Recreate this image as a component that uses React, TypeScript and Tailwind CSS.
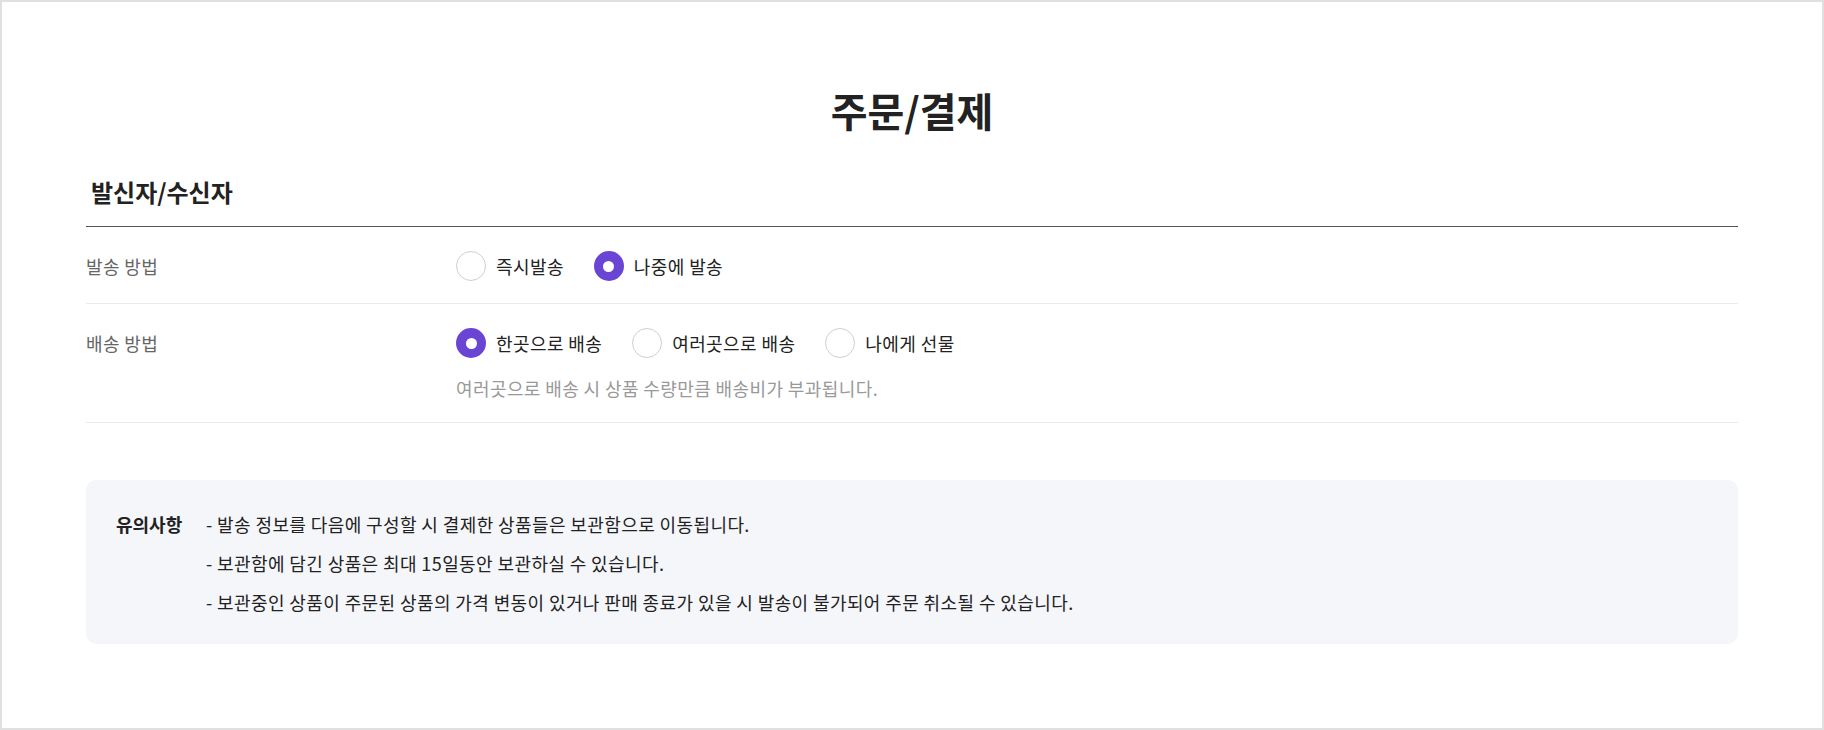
const font = "font-['Noto_Sans_CJK_KR','Noto_Sans',sans-serif]";

interface Option {
  label: string;
  checked: boolean;
}

function Radio({ label, checked }: Option) {
  return (
    <label className="flex items-center gap-[10px] cursor-pointer">
      {checked ? (
        <span className="flex h-[30px] w-[30px] items-center justify-center rounded-full bg-[#6a45d4]">
          <span className="h-[11px] w-[11px] rounded-full bg-white" />
        </span>
      ) : (
        <span className="h-[30px] w-[30px] rounded-full border-[1.5px] border-[#cfcfcf] bg-white" />
      )}
      <span className="text-[18px] leading-[30px] tracking-[0.4px] text-[#222]">{label}</span>
    </label>
  );
}

function Row({
  title,
  options,
  note,
  last,
}: {
  title: string;
  options: Option[];
  note?: string;
  last?: boolean;
}) {
  return (
    <div
      className={`flex border-b border-[#ebebeb] ${
        last ? "pt-[24px] pb-[22px]" : "pt-[24px] pb-[22px]"
      }`}
    >
      <div className="w-[370px] shrink-0 text-[18px] leading-[30px] tracking-[0.4px] text-[#666]">
        {title}
      </div>
      <div className="flex flex-col">
        <div className="flex items-center gap-[30px]">
          {options.map((o) => (
            <Radio key={o.label} {...o} />
          ))}
        </div>
        {note && (
          <p className="mt-[18px] text-[18px] leading-[24px] tracking-[0.4px] text-[#999]">{note}</p>
        )}
      </div>
    </div>
  );
}

const notices = [
  "- 발송 정보를 다음에 구성할 시 결제한 상품들은 보관함으로 이동됩니다.",
  "- 보관함에 담긴 상품은 최대 15일동안 보관하실 수 있습니다.",
  "- 보관중인 상품이 주문된 상품의 가격 변동이 있거나 판매 종료가 있을 시 발송이 불가되어 주문 취소될 수 있습니다.",
];

export default function App() {
  return (
    <div className={`${font} h-[730px] w-full border-2 border-[#e0e0e0] bg-white`}>
      <div className="px-[84px] pt-[82px]">
        <h1 className="text-center text-[40px] font-bold leading-[52px] text-[#222]">주문/결제</h1>

        <div className="mt-[40px] border-b border-[#555] pb-[18px] pl-[5px]">
          <h2 className="text-[24px] font-bold leading-[32px] text-[#222]">발신자/수신자</h2>
        </div>

        <Row
          title="발송 방법"
          options={[
            { label: "즉시발송", checked: false },
            { label: "나중에 발송", checked: true },
          ]}
        />
        <Row
          title="배송 방법"
          last
          options={[
            { label: "한곳으로 배송", checked: true },
            { label: "여러곳으로 배송", checked: false },
            { label: "나에게 선물", checked: false },
          ]}
          note="여러곳으로 배송 시 상품 수량만큼 배송비가 부과됩니다."
        />

        <div className="mt-[57px] flex rounded-[10px] bg-[#f5f6fa] px-[30px] pt-[32px] pb-[30px]">
          <div className="w-[90px] shrink-0 text-[18px] font-bold leading-[24px] text-[#222]">유의사항</div>
          <ul className="flex flex-col gap-[15px]">
            {notices.map((n) => (
              <li key={n} className="text-[18px] leading-[24px] tracking-[0.4px] text-[#222]">
                {n}
              </li>
            ))}
          </ul>
        </div>
      </div>
    </div>
  );
}
